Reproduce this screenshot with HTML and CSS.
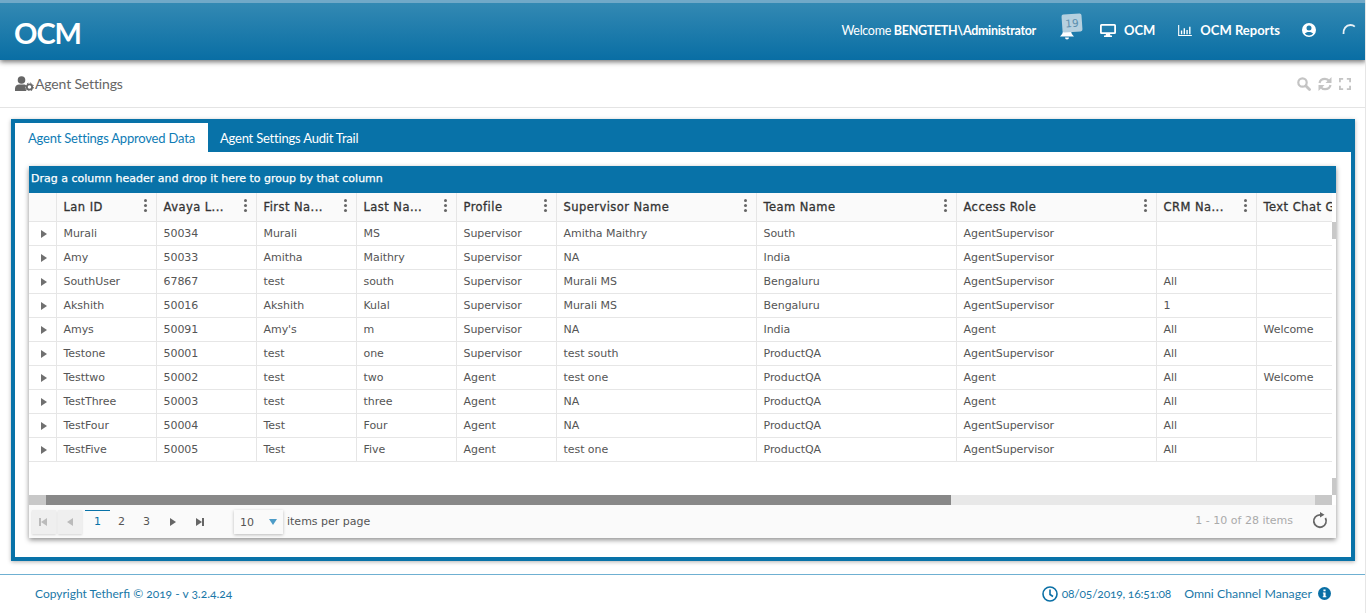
FILE: index.html
```html
<!DOCTYPE html>
<html lang="en">
<head>
  <meta charset="UTF-8">
  <title>OCM - Agent Settings</title>
  <link rel="stylesheet" href="styles.css">
</head>
<body>
  <header class="topbar">
    <div class="logo">OCM</div>
    <nav class="topnav">
      <span class="welcome">Welcome <b>BENGTETH\Administrator</b></span>
      <span class="bell">
        <svg width="14" height="17" viewBox="0 0 14 17"><path fill="#fff" d="M7 1a1 1 0 0 1 1 1c2 .4 3 2 3 5 0 3 1 4.500 3 6.500H0c2-2 3-3.500 3-6.500 0-3 1-4.600 3-5a1 1 0 0 1 1-1zM5 14.500h4a2 2 0 0 1-4 0z"/></svg>
        <span class="badge">19</span>
      </span>
      <span class="navlink nav-ocm">
        <svg width="16" height="13" viewBox="0 0 16 13"><path fill="#fff" fill-rule="evenodd" d="M1.500 0h13A1.500 1.500 0 0 1 16 1.500v7a1.500 1.500 0 0 1-1.500 1.500H10l.5 1.500H12V13H4v-1.500h1.500L6 10H1.500A1.500 1.500 0 0 1 0 8.500v-7A1.500 1.500 0 0 1 1.500 0zM1.800 1.800v6.400h12.400V1.800z"/></svg>
        OCM
      </span>
      <span class="navlink nav-reports">
        <svg width="14" height="11" viewBox="0 0 15 12"><path fill="#fff" d="M0 0h1.200v10.800H15V12H0zM3 6h1.500v4H3zM6 3.500h1.500V10H6zM9 5.500h1.500V10H9zM12 2h1.500v8H12z"/></svg>
        OCM Reports
      </span>
      <svg class="nav-user" width="14" height="14" viewBox="0 0 14 14"><path fill="#fff" fill-rule="evenodd" d="M7 0a7 7 0 1 1 0 14A7 7 0 0 1 7 0zm0 2.600a2.500 2.500 0 1 0 0 5 2.500 2.500 0 0 0 0-5zM2.900 10.700A5.200 5.200 0 0 0 7 12.500a5.200 5.200 0 0 0 4.100-1.800C10.400 9.500 8.900 9 7 9s-3.400.5-4.100 1.700z"/></svg>
      <svg class="nav-spin" width="14" height="14" viewBox="0 0 14 14"><path fill="none" stroke="#e8f1f6" stroke-width="1.800" d="M1.500 11C1 6 4 2 8.500 2c1.800 0 3.200.6 4.300 1.600"/></svg>
    </nav>
  </header>

  <section class="subbar">
    <div class="page-title">
      <svg width="19" height="15" viewBox="0 0 19 15"><circle cx="6.500" cy="4" r="3.800" fill="#666"/><path fill="#666" d="M0 15v-2.500C0 10 2 8.500 4 8.500h5c1 0 1.500.3 2 .7-.8 1.500-.6 3.800.5 5.800z"/><circle cx="14.500" cy="11" r="2.700" fill="none" stroke="#666" stroke-width="1.800"/><circle cx="14.500" cy="11" r="4" fill="none" stroke="#666" stroke-width="1" stroke-dasharray="1.500 1.640"/></svg>
      Agent Settings
    </div>
    <div class="page-tools">
      <svg width="14" height="14" viewBox="0 0 14 14"><circle cx="5.500" cy="5.500" r="4.200" fill="none" stroke="#c4c4c4" stroke-width="2.200"/><path stroke="#c4c4c4" stroke-width="2.800" stroke-linecap="round" d="M9 9l3.500 3.500"/></svg>
      <svg width="14" height="14" viewBox="0 0 14 14"><path fill="none" stroke="#c4c4c4" stroke-width="2.200" d="M1.500 6C2 3.500 4 1.800 7 1.800c2 0 3.400 1 4.300 2.400M12.500 8C12 10.500 10 12.200 7 12.200c-2 0-3.400-1-4.300-2.400"/><path fill="#c4c4c4" d="M13.500 0v6h-6zM.5 14V8h6z"/></svg>
      <svg width="12" height="12" viewBox="0 0 13 13"><path fill="none" stroke="#c4c4c4" stroke-width="2" d="M1 4.500V1h3.500M8.500 1H12v3.500M12 8.500V12H8.500M4.500 12H1V8.500"/></svg>
    </div>
  </section>

  <main class="panel">
    <div class="tabs">
      <span class="tab active">Agent Settings Approved Data</span>
      <span class="tab">Agent Settings Audit Trail</span>
    </div>
    <div class="tab-body">
      <div class="grid">
        <div class="group-band">Drag a column header and drop it here to group by that column</div>
        <div class="grid-view">
          <div class="grid-scroll">
            <table>
              <colgroup>
                <col class="c-expand"><col class="c-w"><col class="c-w"><col class="c-w"><col class="c-w"><col class="c-w"><col class="c-xl"><col class="c-xl"><col class="c-xl"><col class="c-w"><col class="c-w">
              </colgroup>
              <thead>
                <tr>
                  <th></th>
                  <th><span class="th-label">Lan ID</span><i class="kebab"></i></th>
                  <th><span class="th-label">Avaya L...</span><i class="kebab"></i></th>
                  <th><span class="th-label">First Na...</span><i class="kebab"></i></th>
                  <th><span class="th-label">Last Na...</span><i class="kebab"></i></th>
                  <th><span class="th-label">Profile</span><i class="kebab"></i></th>
                  <th><span class="th-label">Supervisor Name</span><i class="kebab"></i></th>
                  <th><span class="th-label">Team Name</span><i class="kebab"></i></th>
                  <th><span class="th-label">Access Role</span><i class="kebab"></i></th>
                  <th><span class="th-label">CRM Na...</span><i class="kebab"></i></th>
                  <th><span class="th-label">Text Chat Group</span></th>
                </tr>
              </thead>
              <tbody>
                <tr><td><i class="arrow"></i></td><td>Murali</td><td>50034</td><td>Murali</td><td>MS</td><td>Supervisor</td><td>Amitha Maithry</td><td>South</td><td>AgentSupervisor</td><td></td><td></td></tr>
                <tr><td><i class="arrow"></i></td><td>Amy</td><td>50033</td><td>Amitha</td><td>Maithry</td><td>Supervisor</td><td>NA</td><td>India</td><td>AgentSupervisor</td><td></td><td></td></tr>
                <tr><td><i class="arrow"></i></td><td>SouthUser</td><td>67867</td><td>test</td><td>south</td><td>Supervisor</td><td>Murali MS</td><td>Bengaluru</td><td>AgentSupervisor</td><td>All</td><td></td></tr>
                <tr><td><i class="arrow"></i></td><td>Akshith</td><td>50016</td><td>Akshith</td><td>Kulal</td><td>Supervisor</td><td>Murali MS</td><td>Bengaluru</td><td>AgentSupervisor</td><td>1</td><td></td></tr>
                <tr><td><i class="arrow"></i></td><td>Amys</td><td>50091</td><td>Amy's</td><td>m</td><td>Supervisor</td><td>NA</td><td>India</td><td>Agent</td><td>All</td><td>Welcome</td></tr>
                <tr><td><i class="arrow"></i></td><td>Testone</td><td>50001</td><td>test</td><td>one</td><td>Supervisor</td><td>test south</td><td>ProductQA</td><td>AgentSupervisor</td><td>All</td><td></td></tr>
                <tr><td><i class="arrow"></i></td><td>Testtwo</td><td>50002</td><td>test</td><td>two</td><td>Agent</td><td>test one</td><td>ProductQA</td><td>Agent</td><td>All</td><td>Welcome</td></tr>
                <tr><td><i class="arrow"></i></td><td>TestThree</td><td>50003</td><td>test</td><td>three</td><td>Agent</td><td>NA</td><td>ProductQA</td><td>Agent</td><td>All</td><td></td></tr>
                <tr><td><i class="arrow"></i></td><td>TestFour</td><td>50004</td><td>Test</td><td>Four</td><td>Agent</td><td>NA</td><td>ProductQA</td><td>AgentSupervisor</td><td>All</td><td></td></tr>
                <tr><td><i class="arrow"></i></td><td>TestFive</td><td>50005</td><td>Test</td><td>Five</td><td>Agent</td><td>test one</td><td>ProductQA</td><td>AgentSupervisor</td><td>All</td><td></td></tr>
              </tbody>
            </table>
          </div>
          <div class="vscroll"><span class="vthumb"></span><span class="vthumb"></span></div>
        </div>
        <div class="hscroll"><span class="hbtn"></span><span class="hthumb"></span><span class="htrack"></span><span class="hbtn"></span><span class="hgap"></span></div>
        <div class="pager">
          <span class="pg-btn disabled"><i class="gl-first"></i></span>
          <span class="pg-btn disabled"><i class="gl-prev"></i></span>
          <span class="pg-num current">1</span>
          <span class="pg-num">2</span>
          <span class="pg-num">3</span>
          <span class="pg-arrow"><i class="gl-next"></i></span>
          <span class="pg-arrow"><i class="gl-last"></i></span>
          <span class="pg-size">10<i class="caret"></i></span>
          <span class="pg-label">items per page</span>
          <span class="pg-info">1 - 10 of 28 items</span>
          <svg class="pg-refresh" width="16" height="17" viewBox="0 0 16 17"><path fill="none" stroke="#666" stroke-width="1.800" d="M13.400 6A6.200 6.200 0 1 1 8 2.800"/><path fill="#666" d="M8 0l4.500 2.800L8 5.600z"/></svg>
        </div>
      </div>
    </div>
  </main>

  <footer class="footer">
    <span class="copy">Copyright Tetherfi © 2019 - v 3.2.4.24</span>
    <div class="foot-right">
      <svg width="16" height="16" viewBox="0 0 16 16"><circle cx="8" cy="8" r="7" fill="none" stroke="#0a6fa5" stroke-width="1.600"/><path fill="none" stroke="#0a6fa5" stroke-width="1.600" d="M8 3.500V8.500l3 2"/></svg>
      <span class="stamp">08/05/2019, 16:51:08</span>
      <span class="product">Omni Channel Manager</span>
      <svg width="13" height="13" viewBox="0 0 12 12"><circle cx="6" cy="6" r="6" fill="#0a6fa5"/><path fill="#fff" d="M5 2.300h2v1.700H5zM4.500 5h2.500v3.500h.7v1H4.400v-1H5V6h-.5z"/></svg>
    </div>
  </footer>
</body>
</html>
```
FILE: styles.css
```css
* {
  box-sizing: border-box;
}
html, body {
  height: 100%;
}
body {
  margin: 0;
  overflow: hidden;
  background: #fff;
  font-family: "Lato", "Open Sans", sans-serif;
  color: #555;
  border-right: 1px solid #e6e6e6;
}

/* top bar */
.topbar {
  height: 60px;
  display: flex;
  align-items: center;
  justify-content: space-between;
  padding: 2px 10px 0 14px;
  border-top: 3px solid #71a9c8;
  background: linear-gradient(#3389b3, #096ea4);
  box-shadow: 0 2px 5px rgba(0, 0, 0, 0.55);
  color: #fff;
  position: relative;
  margin-right: -1px;
}
.logo {
  font-size: 29px;
  font-weight: 700;
  letter-spacing: -1px;
}
.topnav {
  display: flex;
  align-items: center;
  font-size: 13px;
  font-weight: 700;
  margin-bottom: 5px;
}
.welcome {
  font-weight: 400;
  font-size: 12.500px;
  letter-spacing: -0.3px;
  margin-right: 24px;
}
.welcome b {
  font-weight: 700;
}
.bell {
  position: relative;
  display: flex;
  margin-right: 26px;
  margin-top: 2px;
}
.badge {
  position: absolute;
  left: 2px;
  top: -9px;
  width: 20px;
  height: 18px;
  background: #b5d0df;
  border-radius: 2px;
  color: #5d8fae;
  font: 400 10.500px "DejaVu Sans", sans-serif;
  text-align: center;
  line-height: 18px;
  transform: rotate(-4deg);
}
.navlink {
  display: flex;
  align-items: center;
}
.nav-ocm {
  gap: 8px;
  margin-right: 23px;
}
.nav-reports {
  gap: 8px;
  margin-right: 22px;
}
.nav-user {
  margin-right: 26px;
}

/* page heading */
.subbar {
  height: 48px;
  display: flex;
  align-items: center;
  justify-content: space-between;
  padding: 0 14px 0 15px;
  border-bottom: 1px solid #e4e4e4;
}
.page-title {
  display: flex;
  align-items: center;
  gap: 1px;
  font-size: 14px;
  letter-spacing: -0.15px;
  color: #666;
}
.page-tools {
  display: flex;
  align-items: center;
  gap: 7px;
}

/* tab panel */
.panel {
  margin: 11px 10px 0 11px;
  height: 442px;
  border: 4px solid #0872a8;
  background: #0872a8;
  box-shadow: 0 1px 4px rgba(0, 0, 0, 0.3);
  display: flex;
  flex-direction: column;
}
.tabs {
  height: 29px;
  display: flex;
}
.tab {
  padding: 0 13px 0 12px;
  line-height: 30px;
  font-size: 13px;
  letter-spacing: -0.2px;
  color: #fff;
}
.tab.active {
  background: #fff;
  color: #0f7cb5;
  padding: 0 13px;
}
.tab-body {
  flex: 1;
  background: #fff;
  padding: 14px 15px 14px 14px;
}

/* grid */
.grid {
  height: 372px;
  display: flex;
  flex-direction: column;
  font: 11px "DejaVu Sans", sans-serif;
  box-shadow: 0 2px 5px rgba(0, 0, 0, 0.45);
  background: #fff;
}
.group-band {
  height: 27px;
  background: #0872a8;
  color: #fff;
  padding: 0 2px;
  line-height: 25px;
  font-weight: 400;
  -webkit-text-stroke: 0.25px #fff;
}
.grid-view {
  height: 302px;
  display: flex;
}
.grid-scroll {
  flex: 1;
  overflow: hidden;
}
table {
  border-collapse: separate;
  border-spacing: 0;
  table-layout: fixed;
  width: 1327px;
}
.c-expand {
  width: 27px;
}
.c-w {
  width: 100px;
}
.c-xl {
  width: 200px;
}
th {
  height: 29px;
  background: #fafafa;
  border-bottom: 1px solid #e6e6e6;
  border-left: 1px solid #e6e6e6;
  padding: 0 0 0 6.500px;
  text-align: left;
  font-weight: 400;
  font-size: 11.500px;
  letter-spacing: 0.45px;
  color: #333;
  position: relative;
  white-space: nowrap;
  overflow: hidden;
  -webkit-text-stroke: 0.3px #333;
}
th:first-child,
td:first-child {
  border-left: 0;
}
td {
  height: 24px;
  padding: 0 0 0 6.500px;
  border-bottom: 1px solid #e6e6e6;
  border-left: 1px solid #e6e6e6;
  color: #555;
  letter-spacing: -0.05px;
  white-space: nowrap;
  overflow: hidden;
}
.kebab {
  position: absolute;
  right: 9px;
  top: 6px;
  width: 3px;
  height: 3px;
  border-radius: 50%;
  background: #666;
  box-shadow: 0 5px 0 #666, 0 10px 0 #666;
}
.arrow {
  display: block;
  width: 0;
  height: 0;
  margin-left: 5.500px;
  border-left: 6px solid #707070;
  border-top: 4px solid transparent;
  border-bottom: 4px solid transparent;
}
.vscroll {
  width: 4px;
  padding-top: 29px;
  background: #fff;
  display: flex;
  flex-direction: column;
  justify-content: space-between;
}
.vthumb {
  height: 17px;
  background: #c8c8c8;
}
.hscroll {
  height: 10px;
  display: flex;
}
.hbtn {
  width: 17px;
  background: #c8c8c8;
}
.hthumb {
  width: 905px;
  background: #888;
}
.htrack {
  flex: 1;
  background: #e8e8e8;
}
.hgap {
  width: 4px;
  background: #fff;
}

/* pager */
.pager {
  flex: 1;
  display: flex;
  align-items: flex-start;
  background: #fafafa;
  padding: 5px 8px 0 3px;
  color: #555;
  font-size: 11px;
}
.pg-btn {
  width: 24px;
  height: 24px;
  margin-right: 2px;
  background: #efefef;
  box-shadow: 0 1px 2px rgba(0, 0, 0, 0.15);
  display: flex;
  align-items: center;
  justify-content: center;
}
.pg-num {
  width: 25px;
  height: 24px;
  text-align: center;
  line-height: 24px;
}
.pg-num.current {
  color: #0872a8;
  border-top: 1px solid #0872a8;
  line-height: 22px;
  margin-left: 1px;
  margin-right: -1px;
}
.pg-arrow {
  width: 25px;
  height: 24px;
  margin-left: 1px;
  display: flex;
  align-items: center;
  justify-content: center;
}
.gl-first, .gl-prev, .gl-next, .gl-last {
  display: block;
  width: 0;
  height: 0;
  border-top: 4px solid transparent;
  border-bottom: 4px solid transparent;
}
.gl-first, .gl-prev {
  border-right: 6px solid #bbb;
}
.gl-first {
  box-shadow: -2px 0 0 0 #bbb;
}
.gl-next, .gl-last {
  border-left: 6px solid #666;
}
.gl-last {
  box-shadow: 2px 0 0 0 #666;
}
.pg-size {
  width: 49px;
  height: 24px;
  margin-left: 23px;
  padding: 0 6px 0 6px;
  background: #fafafa;
  box-shadow: 0 1px 3px rgba(0, 0, 0, 0.25);
  display: flex;
  align-items: center;
  justify-content: space-between;
}
.caret {
  border-top: 6px solid #4d9cc8;
  border-left: 4px solid transparent;
  border-right: 4px solid transparent;
}
.pg-label {
  margin-left: 4px;
  line-height: 24px;
}
.pg-info {
  margin-left: auto;
  color: #aaa;
  line-height: 22px;
}
.pg-refresh {
  margin-left: 19px;
  margin-top: 2px;
}

/* footer */
.footer {
  margin-top: 13px;
  height: 38px;
  border-top: 1px solid #6fb0d2;
  display: flex;
  align-items: center;
  justify-content: space-between;
  padding: 0 34px 0 35px;
  font-size: 12px;
  color: #1a78a8;
  font-variant-numeric: oldstyle-nums;
}
.foot-right {
  display: flex;
  align-items: center;
}
.stamp {
  margin-left: 4px;
  letter-spacing: -0.2px;
}
.product {
  margin: 0 6px 0 13px;
  font-size: 12.300px;
}
```
